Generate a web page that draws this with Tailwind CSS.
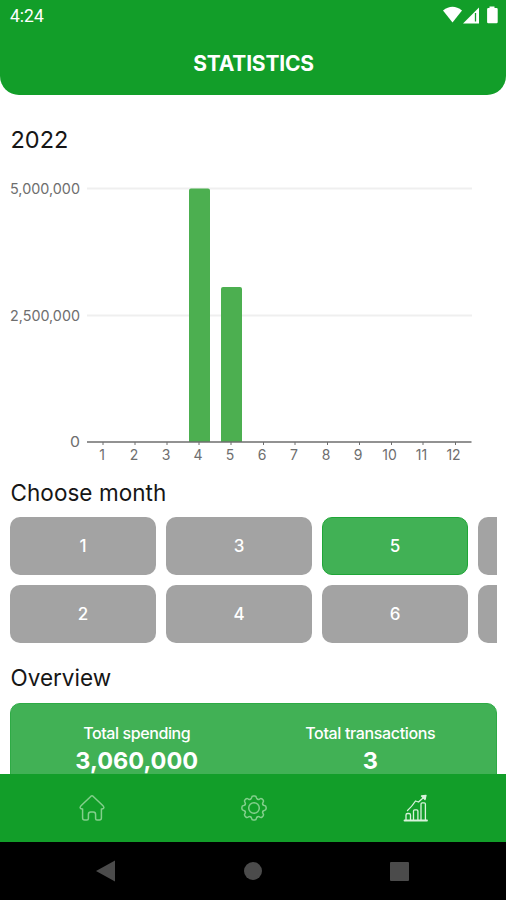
<!DOCTYPE html>
<html lang="en">
<head>
<meta charset="utf-8">
<title>Statistics</title>
<script src="https://cdn.jsdelivr.net/npm/@tailwindcss/browser@4"></script>
</head>
<body class="bg-white">
<div class="w-[506px] h-[900px] flex flex-col overflow-hidden bg-white font-['Inter',sans-serif] text-[#161616]">
  <header class="h-[95px] shrink-0 bg-[#129e29] rounded-b-[19px] text-white">
    <div class="h-8 flex items-center justify-between pl-[10px] pr-[8px]">
      <span class="font-['Roboto',sans-serif] text-[17.5px] leading-8">4:24</span>
      <svg class="w-[56px] h-[20px]" viewBox="442 6 56 20" fill="#fff">
        <path d="M443 10.500Q452.500 3 462 10.500L452.500 22.500Z"/>
        <path d="M463 23.500L479 7.500V23.500Z"/>
        <path d="M475.500 13V21.500" stroke="#129e29" stroke-width="1.300" fill="none"/>
        <path d="M489.500 6.500h5v1.500h2q1.200 0 1.200 1.200V22q0 1.300-1.200 1.300h-8.200q-1.200 0-1.200-1.300V9.200q0-1.200 1.200-1.200h1.200z"/>
      </svg>
    </div>
    <h1 class="text-center font-bold text-[21px] leading-[28px] mt-[18px] pl-[1px] tracking-[-0.2px]">STATISTICS</h1>
  </header>

  <main class="h-[679px] shrink-0 overflow-hidden px-[10px]">
    <h2 class="text-[23.5px] leading-[30px] mt-[30px] pl-[0.5px]">2022</h2>
    <svg class="block w-[486px] h-[309px] mt-[15px]" viewBox="10 170 486 309" font-family="Inter, sans-serif" font-size="14" fill="#6e6e6e">
      <path d="M87 188.500H472M87 315.500H472" stroke="#efefef" stroke-width="2"/>
      <path d="M189 442V190.500q0-2 2-2h17q2 0 2 2V442zM221 442V289q0-2 2-2h17q2 0 2 2V442z" fill="#4caf50"/>
      <path d="M87 442H471.500" stroke="#6e6e6e" stroke-width="1.400"/>
      <path d="M103 442v3M135 442v3M167 442v3M199 442v3M231 442v3M263.500 442v3M295 442v3M327.500 442v3M359.500 442v3M391.500 442v3M423 442v3M455.500 442v3" stroke="#6e6e6e" stroke-width="1"/>
      <g text-anchor="end">
        <text x="80" y="193.500" textLength="70" lengthAdjust="spacingAndGlyphs">5,000,000</text>
        <text x="80" y="320.500" textLength="70" lengthAdjust="spacingAndGlyphs">2,500,000</text>
        <text x="80" y="447" textLength="10" lengthAdjust="spacingAndGlyphs">0</text>
      </g>
      <g text-anchor="middle">
        <text x="102" y="459.600">1</text><text x="134" y="459.600">2</text><text x="166" y="459.600">3</text>
        <text x="198" y="459.600">4</text><text x="230" y="459.600">5</text><text x="262" y="459.600">6</text>
        <text x="294" y="459.600">7</text><text x="326" y="459.600">8</text><text x="358" y="459.600">9</text>
        <text x="389.500" y="459.600">10</text><text x="421.500" y="459.600">11</text><text x="453.500" y="459.600">12</text>
      </g>
    </svg>
    <h2 class="text-[22.5px] leading-[28px] pl-[0.5px] tracking-[0.05px]">Choose month</h2>
    <div class="mt-[10px] w-[487px] overflow-hidden grid grid-flow-col grid-rows-[58px_58px] auto-cols-[146px] gap-[10px] text-white text-[17px] font-medium *:rounded-[10px] *:flex *:items-center *:justify-center *:pt-[2px]">
      <div class="bg-[#a3a3a3]">1</div><div class="bg-[#a3a3a3]">2</div>
      <div class="bg-[#a3a3a3]">3</div><div class="bg-[#a3a3a3]">4</div>
      <div class="bg-[#41b155] border border-[#1fa637]">5</div><div class="bg-[#a3a3a3]">6</div>
      <div class="bg-[#a3a3a3]"></div><div class="bg-[#a3a3a3]"></div>
    </div>
    <h2 class="text-[22.5px] leading-[28px] mt-[21px] pl-[0.5px]">Overview</h2>
    <div class="mt-[11px] w-[487px] h-[110px] rounded-[10px] bg-[#41b155] border border-[#2eab45] text-white flex px-[9px] pt-[18px] text-center">
      <div class="flex-1">
        <div class="text-[16px] leading-[22px] font-medium tracking-[-0.4px]">Total spending</div>
        <div class="text-[23.5px] leading-[32px] font-bold pt-[1px]">3,060,000</div>
      </div>
      <div class="flex-1">
        <div class="text-[16px] leading-[22px] font-medium tracking-[-0.35px]">Total transactions</div>
        <div class="text-[23.5px] leading-[32px] font-bold pt-[1px]">3</div>
      </div>
    </div>
  </main>

  <nav class="h-[68px] shrink-0 bg-[#129e29] flex justify-between items-center pl-[77.5px] pr-[76px]">
    <svg class="w-[28px] h-[28px]" viewBox="-14 -14 28 28" fill="none" stroke="#83cf8c" stroke-width="1.500" stroke-linejoin="round" stroke-linecap="round">
      <path d="M-1-11.800Q0-12.600 1-11.800L11-2.300Q12.500-.8 11.600.3Q10.900 1.100 9.400 1V10Q9.400 12 7.400 12H5Q3.600 12 3.600 10.500V6.500Q3.600 4 1.300 4H-1.300Q-3.600 4-3.600 6.500V10.500Q-3.600 12-5 12H-7.400Q-9.400 12-9.400 10V1Q-10.900 1.100-11.600.3Q-12.500-.8-11-2.300Z"/>
    </svg>
    <svg class="w-[28px] h-[28px]" viewBox="-14 -14 28 28" fill="none" stroke="#83cf8c" stroke-width="1.500" stroke-linejoin="round" stroke-linecap="round">
      <defs><path id="tooth" d="M-3.600-8.700Q-2.600-9.100-2.400-10.300Q-2.200-12.100-.8-12.100H.8Q2.200-12.100 2.400-10.300Q2.600-9.100 3.600-8.700"/></defs>
      <use href="#tooth"/><use href="#tooth" transform="rotate(45)"/><use href="#tooth" transform="rotate(90)"/><use href="#tooth" transform="rotate(135)"/>
      <use href="#tooth" transform="rotate(180)"/><use href="#tooth" transform="rotate(225)"/><use href="#tooth" transform="rotate(270)"/><use href="#tooth" transform="rotate(315)"/>
      <circle r="5.300"/>
    </svg>
    <svg class="w-[28px] h-[28px]" viewBox="402 794 28 28" fill="none" stroke="#d9f2dc" stroke-width="1.300" stroke-linejoin="round" stroke-linecap="round">
      <path d="M404.500 820.500H427" stroke-width="1.800"/>
      <path d="M406 820V815q0-1.500 1.500-1.500h1.500q1.500 0 1.500 1.500V820M413.500 820V811q0-1.200 1.200-1.200h2q1.200 0 1.200 1.200V820M421 820V804q0-1.200 1.200-1.200h2q1.200 0 1.200 1.200V820"/>
      <path d="M407.500 810.500Q412 806.500 415.500 801L418.500 802L424.500 796.800"/>
      <path d="M421.500 796L426 795.300L425 799.500Z" fill="#d9f2dc"/>
    </svg>
  </nav>
  <div class="h-[58px] shrink-0 bg-black flex items-center justify-between pl-[96px] pr-[97px]">
    <svg class="w-[19px] h-[22px]" viewBox="0 0 19 22"><path d="M0 11L19 .5V21.500Z" fill="#4b4b4b"/></svg>
    <div class="size-[18px] rounded-full bg-[#4b4b4b] ml-[1px]"></div>
    <div class="size-[19px] rounded-[1px] bg-[#4b4b4b]"></div>
  </div>
</div>
</body>
</html>
